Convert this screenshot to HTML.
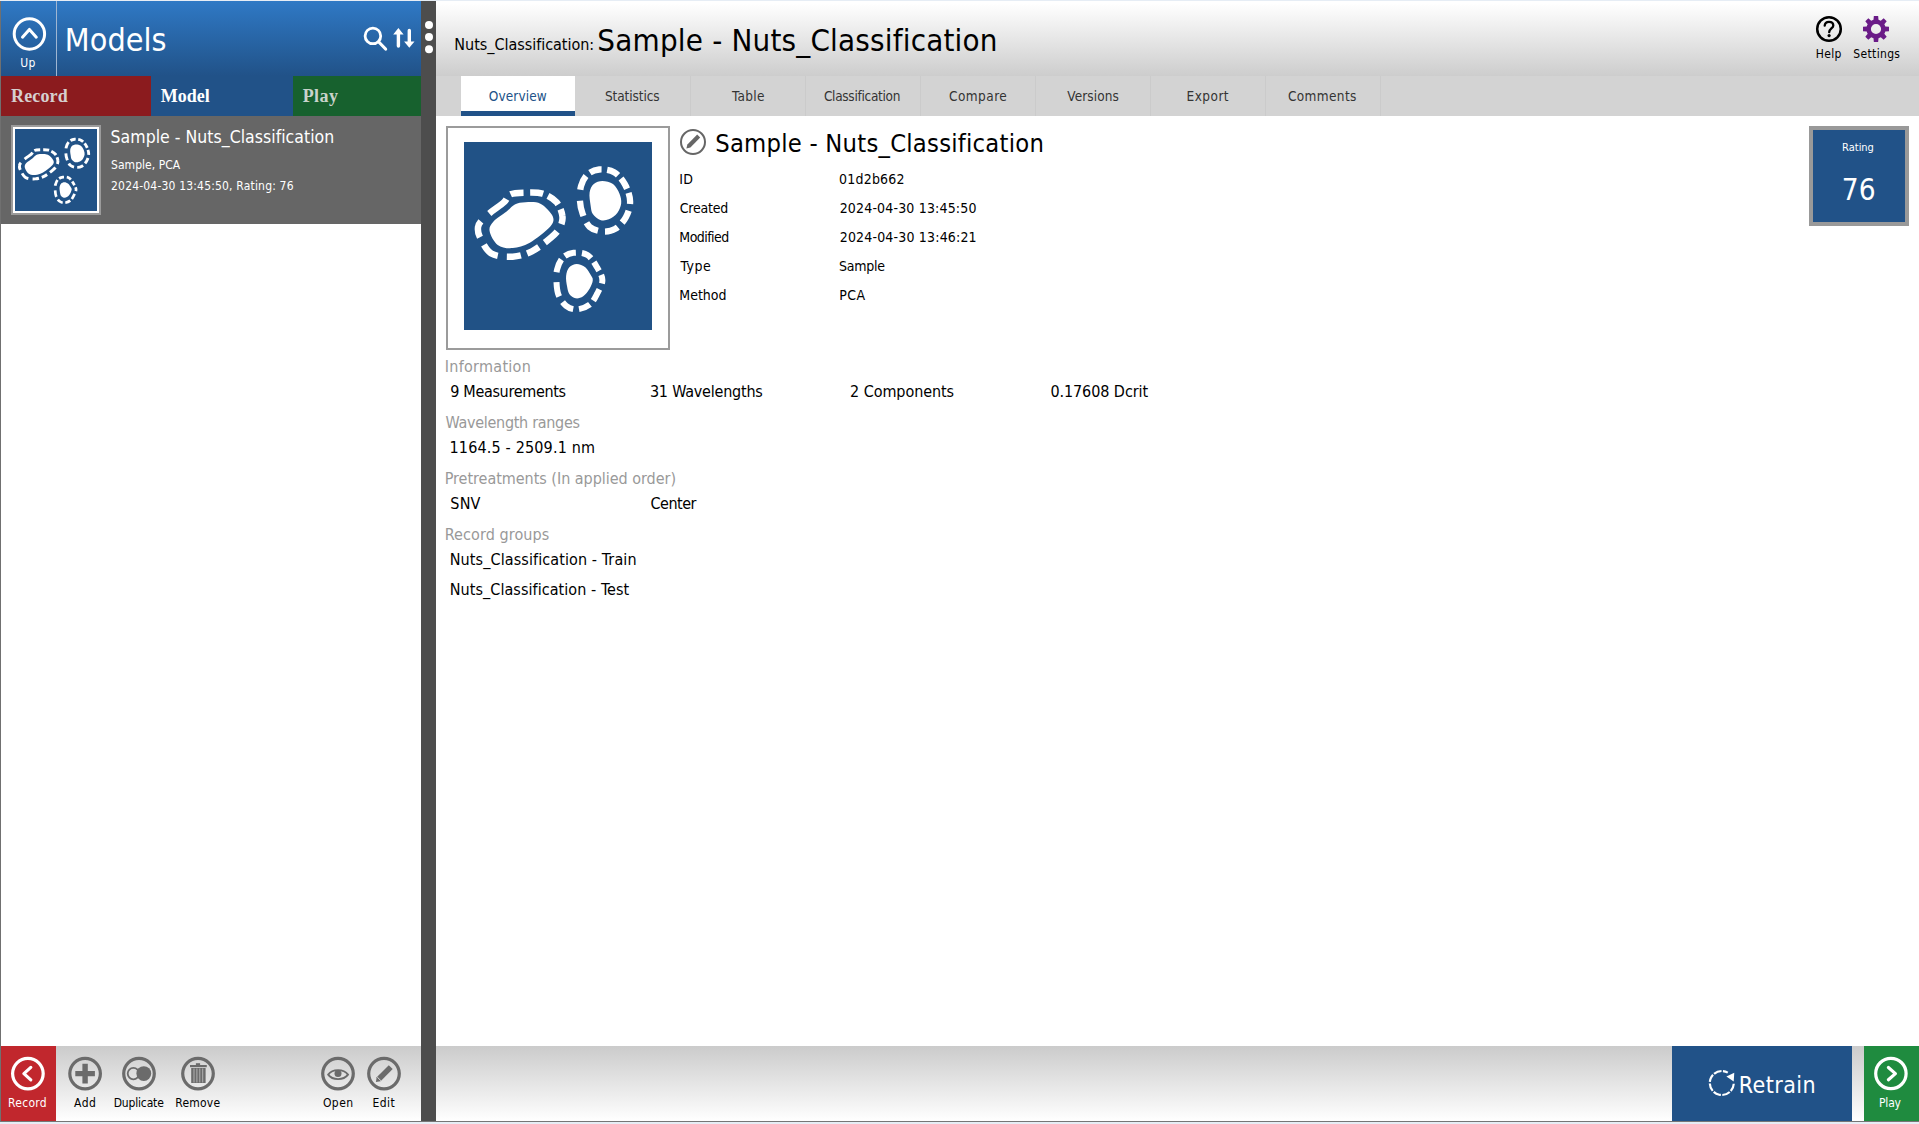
<!DOCTYPE html>
<html lang="en"><head><meta charset="utf-8"><title>Models - Nuts_Classification</title>
<style>
html,body{margin:0;padding:0}
body{width:1919px;height:1124px;position:relative;overflow:hidden;background:#fff;font-family:"DejaVu Sans Condensed","Liberation Sans",sans-serif}
.a{position:absolute}
.t{position:absolute;white-space:nowrap;line-height:1}
svg{position:absolute;overflow:visible}
#topline{left:0;top:0;width:1919px;height:1px;background:#e6edf5}
#leftedge{left:0;top:1px;width:1px;height:1120px;background:#707070}
#lhead{left:1px;top:1px;width:420px;height:75px;background:linear-gradient(#2f79c5,#215288)}
#lsep{left:56px;top:1px;width:1px;height:75px;background:#9fb6d2}
#tabrec{left:1px;top:76px;width:150px;height:40px;background:#8b1b1e}
#tabmod{left:151px;top:76px;width:142px;height:40px;background:#215288}
#tabplay{left:293px;top:76px;width:128px;height:40px;background:#17612e}
#item{left:1px;top:116px;width:420px;height:108px;background:#666}
#thumb{left:11px;top:125px;width:82px;height:82px;border:2px solid #9b9b9b;box-shadow:inset 0 0 0 2px #fff;background:#215286;padding:2px}
#split{left:421px;top:1px;width:15px;height:1120px;background:#4d4d4d}
#rhead{left:436px;top:1px;width:1483px;height:75px;background:linear-gradient(#fff 0,#fff 3%,#cdcdcd 100%)}
#rtabs{left:436px;top:76px;width:1483px;height:40px;background:#d3d3d3}
.sep{position:absolute;top:76px;width:1px;height:40px;background:#cbcbcb}
#tabact{left:461px;top:76px;width:114px;height:40px;background:#fff}
#tabul{left:461px;top:111px;width:114px;height:5px;background:#215288}
#frame{left:446px;top:126px;width:220px;height:220px;border:2px solid #9b9b9b;background:#fff}
#bigicon{left:464px;top:142px;width:188px;height:188px;background:#215286}
#rating{left:1809px;top:126px;width:92px;height:92px;border:4px solid #999;background:#215288}
#lbot{left:1px;top:1046px;width:420px;height:75px;background:linear-gradient(#cbcbcb,#fff)}
#rbot{left:436px;top:1046px;width:1483px;height:75px;background:linear-gradient(#cbcbcb,#fff)}
#brec{left:1px;top:1046px;width:55px;height:75px;background:#c1272d}
#bretrain{left:1672px;top:1046px;width:180px;height:75px;background:#215288}
#bplay{left:1864px;top:1046px;width:55px;height:75px;background:#1f8b3f}
#botline{left:0;top:1121px;width:1919px;height:1px;background:#767676}
#botpad{left:0;top:1122px;width:1919px;height:2px;background:#e6edf5}

</style></head>
<body>
<div class="a" id="topline"></div>
<div class="a" id="leftedge"></div>
<!-- left panel -->
<div class="a" id="lhead"></div>
<div class="a" id="lsep"></div>
<svg style="left:0;top:0" width="60" height="76" viewBox="0 0 60 76"><circle cx="29.4" cy="34" r="15.2" fill="none" stroke="#fff" stroke-width="3"/><path d="M22.5 37.2 L29.4 29.4 L36.3 37.2" fill="none" stroke="#fff" stroke-width="3" stroke-linecap="round" stroke-linejoin="round"/></svg>
<svg style="left:355px;top:0" width="66" height="76" viewBox="355 0 66 76"><circle cx="372.9" cy="35.9" r="7.8" fill="none" stroke="#fff" stroke-width="2.8"/><path d="M378.8 42 L385.6 49" stroke="#fff" stroke-width="3.2" stroke-linecap="round"/>
<path d="M398.4 28 L403.6 34.4 L400.1 34.4 L400.1 46 A1.7 1.7 0 0 1 396.7 46 L396.7 34.4 L393.2 34.4 Z" fill="#fff"/>
<path d="M409.3 47.8 L404.1 41.6 L407.6 41.6 L407.6 30.5 A1.7 1.7 0 0 1 411 30.5 L411 41.6 L414.5 41.6 Z" fill="#fff"/></svg>
<div class="a" id="tabrec"></div><div class="a" id="tabmod"></div><div class="a" id="tabplay"></div>
<div class="a" id="item"></div>
<div class="a" id="thumb"><svg style="position:static;display:block" width="82" height="82" viewBox="0 0 188 188"><g transform="translate(94 94) scale(1.043) translate(-94.3 -95.2)" fill="#fff" stroke="none">
<path d="M50.8 62.4C54.0 60.8 57.2 60.3 61.5 60.2C65.8 60.1 71.9 59.4 76.4 61.7C81.0 64.0 87.0 70.3 88.6 74.1C90.2 77.9 89.9 80.3 86.1 84.8C82.2 89.2 72.0 97.2 65.8 100.8C59.5 104.3 54.0 105.8 48.7 106.1C43.3 106.5 37.6 105.8 33.7 102.9C29.9 100.1 26.3 93.0 25.6 89.0C24.9 85.1 26.7 82.6 29.5 79.4C32.2 76.2 38.7 72.7 42.3 69.8C45.8 67.0 47.6 64.0 50.8 62.4Z"/>
<path d="M125.6 50.6C126.1 47.0 127.7 44.0 129.8 42.1C132.0 40.1 135.2 38.9 138.4 38.9C141.6 38.9 146.2 39.9 149.0 42.1C151.9 44.2 154.1 48.5 155.5 51.7C156.8 54.9 157.5 58.1 157.2 61.3C156.8 64.5 155.4 68.2 153.3 70.9C151.3 73.6 147.6 76.1 144.8 77.3C141.9 78.5 138.9 78.8 136.2 77.9C133.6 77.1 130.4 74.4 128.8 72.0C127.2 69.5 127.2 67.0 126.6 63.4C126.1 59.9 125.0 54.2 125.6 50.6Z"/>
<path d="M102.1 133.9C102.4 130.7 103.5 127.3 105.3 125.3C107.1 123.4 110.1 122.1 112.7 122.1C115.4 122.1 119.0 123.6 121.3 125.3C123.6 127.1 125.4 130.7 126.6 132.8C127.9 135.0 128.9 135.8 128.8 138.2C128.6 140.5 127.2 144.0 125.6 146.7C124.0 149.4 121.5 152.6 119.2 154.2C116.8 155.8 114.0 156.7 111.7 156.3C109.4 156.0 106.7 154.0 105.3 152.0C103.9 150.1 103.7 147.6 103.1 144.6C102.6 141.5 101.7 137.1 102.1 133.9Z"/>
<g fill="none" stroke="#fff" stroke-width="6.5" stroke-dasharray="13.10 6.75 12.91 5.36 13.40 5.26 15.19 8.74 16.58 7.25 13.40 6.65 14.30 8.93 18.37 8.44 17.37 11.42 22.34 6.95">
<path d="M46.6 52.3C50.1 50.7 56.2 50.7 61.5 50.6C66.8 50.5 73.4 50.1 78.6 51.7C83.7 53.3 89.2 56.5 92.5 60.2C95.8 64.0 97.9 69.8 98.4 74.1C99.0 78.4 97.6 82.3 95.7 85.8C93.8 89.4 91.8 91.5 87.1 95.5C82.5 99.4 74.3 106.1 67.9 109.3C61.5 112.5 55.4 114.3 48.7 114.7C41.9 115.0 32.8 114.8 27.3 111.5C21.8 108.1 17.8 98.8 15.6 94.4C13.4 89.9 13.7 87.4 14.1 84.8C14.4 82.1 15.5 80.9 17.7 78.4C19.9 75.9 23.6 72.9 27.3 69.8C31.1 66.8 36.9 63.1 40.1 60.2C43.3 57.3 43.0 53.9 46.6 52.3Z"/>
<path stroke-width="6.3" stroke-dasharray="2.53 5.45 12.26 4.38 11.97 4.28 11.29 6.81 13.72 6.03 13.92 7.20 14.31 7.30 15.87 10.90 14.99 5.35 10.22 0.00" d="M135.2 27.5C139.6 27.2 145.8 27.9 150.1 30.3C154.4 32.7 158.1 37.3 160.8 42.1C163.5 46.9 166.0 53.6 166.1 59.2C166.3 64.7 164.4 70.5 161.9 75.2C159.4 79.8 155.1 84.5 151.2 86.9C147.3 89.3 142.6 89.8 138.4 89.5C134.1 89.1 128.8 87.7 125.6 84.8C122.3 81.9 120.3 76.2 118.7 72.0C117.1 67.7 116.2 63.8 116.0 59.2C115.7 54.5 115.8 48.7 117.0 44.2C118.3 39.8 120.4 35.2 123.4 32.5C126.5 29.7 130.7 27.9 135.2 27.5Z"/>
<path stroke-width="6" stroke-dasharray="2.53 5.94 10.62 4.87 10.03 4.68 8.77 6.43 12.76 5.16 11.79 5.94 13.05 6.53 14.71 9.84 13.54 5.07 9.64 0.00" d="M109.5 110.8C113.6 110.4 119.5 110.5 123.4 113.0C127.3 115.4 130.5 121.1 133.0 125.3C135.5 129.5 138.4 133.7 138.4 138.2C138.4 142.6 135.2 147.9 133.0 152.0C130.9 156.1 128.9 160.2 125.6 162.7C122.2 165.3 116.7 167.2 112.7 167.4C108.8 167.6 105.1 166.2 102.1 163.8C99.0 161.4 96.2 157.0 94.6 153.1C93.0 149.2 92.7 144.6 92.5 140.3C92.2 136.0 92.0 131.6 93.1 127.5C94.2 123.4 96.1 118.5 98.9 115.7C101.6 113.0 105.5 111.3 109.5 110.8Z"/>
</g></g></svg></div>
<div class="a" id="split"></div>
<svg style="left:421px;top:0" width="15" height="76" viewBox="421 0 15 76"><circle cx="429" cy="25" r="4" fill="#fff"/><circle cx="429" cy="37" r="4" fill="#fff"/><circle cx="429" cy="49.2" r="4" fill="#fff"/></svg>
<!-- right panel -->
<div class="a" id="rhead"></div>
<div class="a" id="rtabs"></div>
<div class="a" id="tabact"></div><div class="a" id="tabul"></div>
<div class="sep" style="left:690px"></div><div class="sep" style="left:805px"></div><div class="sep" style="left:920px"></div><div class="sep" style="left:1035px"></div><div class="sep" style="left:1150px"></div><div class="sep" style="left:1265px"></div><div class="sep" style="left:1380px"></div>
<svg style="left:1810px;top:10px" width="100" height="40" viewBox="1810 10 100 40"><circle cx="1829" cy="29" r="11.8" fill="none" stroke="#000" stroke-width="2.5"/>
<path d="M1824.7 25.6 C1824.9 23.2 1826.7 21.8 1829 21.8 C1831.5 21.8 1833.3 23.3 1833.3 25.4 C1833.3 28.2 1829.2 28.8 1829.2 32.2" fill="none" stroke="#000" stroke-width="2.3" stroke-linecap="round"/><circle cx="1829.1" cy="35.6" r="1.6" fill="#000"/>
<path id="gear" fill="#6a1b87" fill-rule="evenodd" d="M1873.50 19.73L1873.85 16.00 L1878.15 16.00 L1878.50 19.73A9.6 9.6 0 0 1 1880.79 20.68L1883.67 18.29 L1886.71 21.33 L1884.32 24.21A9.6 9.6 0 0 1 1885.27 26.50L1889.00 26.85 L1889.00 31.15 L1885.27 31.50A9.6 9.6 0 0 1 1884.32 33.79L1886.71 36.67 L1883.67 39.71 L1880.79 37.32A9.6 9.6 0 0 1 1878.50 38.27L1878.15 42.00 L1873.85 42.00 L1873.50 38.27A9.6 9.6 0 0 1 1871.21 37.32L1868.33 39.71 L1865.29 36.67 L1867.68 33.79A9.6 9.6 0 0 1 1866.73 31.50L1863.00 31.15 L1863.00 26.85 L1866.73 26.50A9.6 9.6 0 0 1 1867.68 24.21L1865.29 21.33 L1868.33 18.29 L1871.21 20.68A9.6 9.6 0 0 1 1873.50 19.73 ZM1870.90 29.00 a5.1 5.1 0 1 0 10.20 0 a5.1 5.1 0 1 0 -10.20 0 Z"/></svg>
<div class="a" id="frame"></div>
<div class="a" id="bigicon"><svg style="position:static;display:block" width="188" height="188" viewBox="0 0 188 188"><g fill="#fff" stroke="none">
<path d="M50.8 62.4C54.0 60.8 57.2 60.3 61.5 60.2C65.8 60.1 71.9 59.4 76.4 61.7C81.0 64.0 87.0 70.3 88.6 74.1C90.2 77.9 89.9 80.3 86.1 84.8C82.2 89.2 72.0 97.2 65.8 100.8C59.5 104.3 54.0 105.8 48.7 106.1C43.3 106.5 37.6 105.8 33.7 102.9C29.9 100.1 26.3 93.0 25.6 89.0C24.9 85.1 26.7 82.6 29.5 79.4C32.2 76.2 38.7 72.7 42.3 69.8C45.8 67.0 47.6 64.0 50.8 62.4Z"/>
<path d="M125.6 50.6C126.1 47.0 127.7 44.0 129.8 42.1C132.0 40.1 135.2 38.9 138.4 38.9C141.6 38.9 146.2 39.9 149.0 42.1C151.9 44.2 154.1 48.5 155.5 51.7C156.8 54.9 157.5 58.1 157.2 61.3C156.8 64.5 155.4 68.2 153.3 70.9C151.3 73.6 147.6 76.1 144.8 77.3C141.9 78.5 138.9 78.8 136.2 77.9C133.6 77.1 130.4 74.4 128.8 72.0C127.2 69.5 127.2 67.0 126.6 63.4C126.1 59.9 125.0 54.2 125.6 50.6Z"/>
<path d="M102.1 133.9C102.4 130.7 103.5 127.3 105.3 125.3C107.1 123.4 110.1 122.1 112.7 122.1C115.4 122.1 119.0 123.6 121.3 125.3C123.6 127.1 125.4 130.7 126.6 132.8C127.9 135.0 128.9 135.8 128.8 138.2C128.6 140.5 127.2 144.0 125.6 146.7C124.0 149.4 121.5 152.6 119.2 154.2C116.8 155.8 114.0 156.7 111.7 156.3C109.4 156.0 106.7 154.0 105.3 152.0C103.9 150.1 103.7 147.6 103.1 144.6C102.6 141.5 101.7 137.1 102.1 133.9Z"/>
<g fill="none" stroke="#fff" stroke-width="6.5" stroke-dasharray="13.10 6.75 12.91 5.36 13.40 5.26 15.19 8.74 16.58 7.25 13.40 6.65 14.30 8.93 18.37 8.44 17.37 11.42 22.34 6.95">
<path d="M46.6 52.3C50.1 50.7 56.2 50.7 61.5 50.6C66.8 50.5 73.4 50.1 78.6 51.7C83.7 53.3 89.2 56.5 92.5 60.2C95.8 64.0 97.9 69.8 98.4 74.1C99.0 78.4 97.6 82.3 95.7 85.8C93.8 89.4 91.8 91.5 87.1 95.5C82.5 99.4 74.3 106.1 67.9 109.3C61.5 112.5 55.4 114.3 48.7 114.7C41.9 115.0 32.8 114.8 27.3 111.5C21.8 108.1 17.8 98.8 15.6 94.4C13.4 89.9 13.7 87.4 14.1 84.8C14.4 82.1 15.5 80.9 17.7 78.4C19.9 75.9 23.6 72.9 27.3 69.8C31.1 66.8 36.9 63.1 40.1 60.2C43.3 57.3 43.0 53.9 46.6 52.3Z"/>
<path stroke-width="6.3" stroke-dasharray="2.53 5.45 12.26 4.38 11.97 4.28 11.29 6.81 13.72 6.03 13.92 7.20 14.31 7.30 15.87 10.90 14.99 5.35 10.22 0.00" d="M135.2 27.5C139.6 27.2 145.8 27.9 150.1 30.3C154.4 32.7 158.1 37.3 160.8 42.1C163.5 46.9 166.0 53.6 166.1 59.2C166.3 64.7 164.4 70.5 161.9 75.2C159.4 79.8 155.1 84.5 151.2 86.9C147.3 89.3 142.6 89.8 138.4 89.5C134.1 89.1 128.8 87.7 125.6 84.8C122.3 81.9 120.3 76.2 118.7 72.0C117.1 67.7 116.2 63.8 116.0 59.2C115.7 54.5 115.8 48.7 117.0 44.2C118.3 39.8 120.4 35.2 123.4 32.5C126.5 29.7 130.7 27.9 135.2 27.5Z"/>
<path stroke-width="6" stroke-dasharray="2.53 5.94 10.62 4.87 10.03 4.68 8.77 6.43 12.76 5.16 11.79 5.94 13.05 6.53 14.71 9.84 13.54 5.07 9.64 0.00" d="M109.5 110.8C113.6 110.4 119.5 110.5 123.4 113.0C127.3 115.4 130.5 121.1 133.0 125.3C135.5 129.5 138.4 133.7 138.4 138.2C138.4 142.6 135.2 147.9 133.0 152.0C130.9 156.1 128.9 160.2 125.6 162.7C122.2 165.3 116.7 167.2 112.7 167.4C108.8 167.6 105.1 166.2 102.1 163.8C99.0 161.4 96.2 157.0 94.6 153.1C93.0 149.2 92.7 144.6 92.5 140.3C92.2 136.0 92.0 131.6 93.1 127.5C94.2 123.4 96.1 118.5 98.9 115.7C101.6 113.0 105.5 111.3 109.5 110.8Z"/>
</g></g></svg></div>
<svg style="left:678px;top:127px" width="30" height="30" viewBox="678 127 30 30"><circle cx="693" cy="142" r="12" fill="none" stroke="#666" stroke-width="2"/><path d="M697.2 134.6 L700.2 137.6 L690.4 147.4 L686.4 148.4 L687.4 144.4 Z" fill="#666"/></svg>
<div class="a" id="rating"></div>
<!-- bottom bars -->
<div class="a" id="lbot"></div><div class="a" id="rbot"></div>
<div class="a" id="brec"></div><div class="a" id="bretrain"></div><div class="a" id="bplay"></div>
<svg style="left:0;top:1046px" width="421" height="75" viewBox="0 1046 421 75">
<circle cx="27.9" cy="1073.6" r="15.3" fill="none" stroke="#fff" stroke-width="3.2"/><path d="M30.8 1067.4 L23.9 1073.6 L30.8 1079.9" fill="none" stroke="#fff" stroke-width="3.2" stroke-linecap="round" stroke-linejoin="round"/>
<g fill="none" stroke="#6b6b6b" stroke-width="3.2"><circle cx="85.1" cy="1073.6" r="15.3"/><circle cx="139" cy="1073.6" r="15.3"/><circle cx="198" cy="1073.6" r="15.3"/><circle cx="338" cy="1073.6" r="15.3"/><circle cx="384" cy="1073.6" r="15.3"/></g>
<path d="M82.4 1063.8 h5.4 v7.1 h7.1 v5.4 h-7.1 v7.1 h-5.4 v-7.1 h-7.1 v-5.4 h7.1 Z" fill="#6b6b6b"/>
<circle cx="133.4" cy="1073.6" r="5.7" fill="none" stroke="#6b6b6b" stroke-width="1.8"/><circle cx="143.8" cy="1073.6" r="7.4" fill="#6b6b6b"/>
<g fill="#6b6b6b"><rect x="195.9" y="1063.2" width="4.2" height="2"/><rect x="190" y="1065" width="16.8" height="2.2"/><rect x="191.2" y="1068" width="14.4" height="15"/></g>
<g stroke="#b9b9b9" stroke-width="0.9"><path d="M194 1068.5v14M196.9 1068.5v14M199.8 1068.5v14M202.7 1068.5v14"/></g>
<path d="M328.2 1074.6 C332.5 1068.6 343.5 1068.6 348 1074.6 C343.5 1080.6 332.5 1080.6 328.2 1074.6 Z" fill="none" stroke="#6b6b6b" stroke-width="1.9"/><circle cx="338" cy="1073.6" r="3.5" fill="#6b6b6b"/>
<path d="M388.8 1065.2 L392.7 1069.1 L380.6 1081.2 L375.9 1082 L376.7 1077.3 Z" fill="#6b6b6b"/><path d="M377.2 1077 L380.9 1080.7" stroke="#dcdcdc" stroke-width="1"/>
</svg>
<svg style="left:1672px;top:1046px" width="247" height="75" viewBox="1672 1046 247 75">
<path d="M1733.78 1083.71 A12.0 12.0 0 1 1 1727.80 1072.61" fill="none" stroke="#fff" stroke-width="2.2" stroke-dasharray="8 1.42"/>
<path d="M1734.3 1072.8 L1726.4 1076.6 L1733.7 1081.4 Z" fill="#fff"/>
<circle cx="1890.9" cy="1073.5" r="15.2" fill="none" stroke="#fff" stroke-width="3.2"/><path d="M1888.4 1067.5 L1895.4 1073.6 L1888.4 1079.8" fill="none" stroke="#fff" stroke-width="3.2" stroke-linecap="round" stroke-linejoin="round"/>
</svg>
<div class="a" id="botline"></div><div class="a" id="botpad"></div>

<!-- text labels -->
<div class="t" id="t0" style="left:20.21px;top:57.00px;font-size:12px;color:#fff;letter-spacing:0.450px;">Up</div>
<div class="t" id="t1" style="left:64.85px;top:24.01px;font-size:32px;color:#fff;letter-spacing:0.055px;">Models</div>
<div class="t" id="t2" style="left:11.00px;top:87.00px;font-size:18px;color:#d6cfcf;font-family:'Liberation Serif',serif;letter-spacing:0.141px;font-weight:bold">Record</div>
<div class="t" id="t3" style="left:160.68px;top:87.00px;font-size:18px;color:#fff;font-family:'Liberation Serif',serif;letter-spacing:0.047px;font-weight:bold">Model</div>
<div class="t" id="t4" style="left:302.68px;top:87.00px;font-size:18px;color:#c9d3cb;font-family:'Liberation Serif',serif;letter-spacing:0.450px;font-weight:bold">Play</div>
<div class="t" id="t5" style="left:110.58px;top:129.01px;font-size:17.5px;color:#fff;letter-spacing:0.027px;">Sample - Nuts_Classification</div>
<div class="t" id="t6" style="left:111.03px;top:159.00px;font-size:12px;color:#fff;letter-spacing:0.044px;">Sample, PCA</div>
<div class="t" id="t7" style="left:111.06px;top:180.00px;font-size:12px;color:#fff;letter-spacing:0.180px;">2024-04-30 13:45:50, Rating: 76</div>
<div class="t" id="t8" style="left:454.37px;top:37.01px;font-size:16px;color:#000;letter-spacing:-0.028px;">Nuts_Classification:</div>
<div class="t" id="t9" style="left:597.35px;top:25.01px;font-size:31px;color:#000;letter-spacing:0.197px;">Sample - Nuts_Classification</div>
<div class="t" id="t10" style="left:1815.77px;top:48.00px;font-size:12px;color:#000;letter-spacing:0.305px;">Help</div>
<div class="t" id="t11" style="left:1853.32px;top:48.00px;font-size:12px;color:#000;letter-spacing:0.341px;">Settings</div>
<div class="t" id="t12" style="left:488.79px;top:90.00px;font-size:13.5px;color:#215288;letter-spacing:0.109px;">Overview</div>
<div class="t" id="t13" style="left:605.02px;top:90.00px;font-size:13.5px;color:#333;letter-spacing:-0.110px;">Statistics</div>
<div class="t" id="t14" style="left:732.11px;top:90.00px;font-size:13.5px;color:#333;letter-spacing:0.274px;">Table</div>
<div class="t" id="t15" style="left:823.95px;top:90.00px;font-size:13.5px;color:#333;letter-spacing:-0.298px;">Classification</div>
<div class="t" id="t16" style="left:949.01px;top:90.00px;font-size:13.5px;color:#333;letter-spacing:0.450px;">Compare</div>
<div class="t" id="t17" style="left:1067.33px;top:90.00px;font-size:13.5px;color:#333;letter-spacing:0.086px;">Versions</div>
<div class="t" id="t18" style="left:1186.62px;top:90.00px;font-size:13.5px;color:#333;letter-spacing:0.450px;">Export</div>
<div class="t" id="t19" style="left:1287.98px;top:90.00px;font-size:13.5px;color:#333;letter-spacing:0.370px;">Comments</div>
<div class="t" id="t20" style="left:715.21px;top:131.00px;font-size:25.3px;color:#000;letter-spacing:0.238px;">Sample - Nuts_Classification</div>
<div class="t" id="t21" style="left:679.18px;top:172.00px;font-size:14px;color:#000;letter-spacing:0.450px;">ID</div>
<div class="t" id="t22" style="left:839.04px;top:172.00px;font-size:14px;color:#000;letter-spacing:0.204px;">01d2b662</div>
<div class="t" id="t23" style="left:679.81px;top:201.00px;font-size:14px;color:#000;letter-spacing:-0.232px;">Created</div>
<div class="t" id="t24" style="left:839.69px;top:201.00px;font-size:14px;color:#000;letter-spacing:0.167px;">2024-04-30 13:45:50</div>
<div class="t" id="t25" style="left:679.34px;top:230.00px;font-size:14px;color:#000;letter-spacing:-0.559px;">Modified</div>
<div class="t" id="t26" style="left:839.69px;top:230.00px;font-size:14px;color:#000;letter-spacing:0.178px;">2024-04-30 13:46:21</div>
<div class="t" id="t27" style="left:680.61px;top:259.00px;font-size:14px;color:#000;letter-spacing:0.450px;">Type</div>
<div class="t" id="t28" style="left:839.00px;top:259.00px;font-size:14px;color:#000;letter-spacing:-0.254px;">Sample</div>
<div class="t" id="t29" style="left:679.34px;top:288.00px;font-size:14px;color:#000;letter-spacing:-0.030px;">Method</div>
<div class="t" id="t30" style="left:839.34px;top:288.00px;font-size:14px;color:#000;letter-spacing:0.450px;">PCA</div>
<div class="t" id="t31" style="left:444.71px;top:359.01px;font-size:16px;color:#999;letter-spacing:0.281px;">Information</div>
<div class="t" id="t32" style="left:450.24px;top:384.01px;font-size:16px;color:#000;letter-spacing:-0.323px;">9 Measurements</div>
<div class="t" id="t33" style="left:649.90px;top:384.01px;font-size:16px;color:#000;letter-spacing:-0.212px;">31 Wavelengths</div>
<div class="t" id="t34" style="left:850.12px;top:384.01px;font-size:16px;color:#000;letter-spacing:-0.072px;">2 Components</div>
<div class="t" id="t35" style="left:1050.38px;top:384.01px;font-size:16px;color:#000;letter-spacing:-0.073px;">0.17608 Dcrit</div>
<div class="t" id="t36" style="left:445.60px;top:415.01px;font-size:16px;color:#999;letter-spacing:-0.300px;">Wavelength ranges</div>
<div class="t" id="t37" style="left:449.55px;top:440.01px;font-size:16px;color:#000;letter-spacing:0.159px;">1164.5 - 2509.1 nm</div>
<div class="t" id="t38" style="left:444.69px;top:471.01px;font-size:16px;color:#999;letter-spacing:-0.030px;">Pretreatments (In applied order)</div>
<div class="t" id="t39" style="left:450.28px;top:496.01px;font-size:16px;color:#000;letter-spacing:0.224px;">SNV</div>
<div class="t" id="t40" style="left:650.55px;top:496.01px;font-size:16px;color:#000;letter-spacing:-0.501px;">Center</div>
<div class="t" id="t41" style="left:444.69px;top:527.20px;font-size:16px;color:#999;letter-spacing:0.090px;">Record groups</div>
<div class="t" id="t42" style="left:449.74px;top:552.01px;font-size:16px;color:#000;letter-spacing:0.104px;">Nuts_Classification - Train</div>
<div class="t" id="t43" style="left:449.74px;top:582.01px;font-size:16px;color:#000;letter-spacing:0.062px;">Nuts_Classification - Test</div>
<div class="t" id="t44" style="left:1842.12px;top:142.01px;font-size:11px;color:#fff;letter-spacing:-0.019px;">Rating</div>
<div class="t" id="t45" style="left:1841.82px;top:176.01px;font-size:29.5px;color:#fff;letter-spacing:0.112px;">76</div>
<div class="t" id="t46" style="left:8.09px;top:1097.00px;font-size:12px;color:#fff;letter-spacing:0.256px;">Record</div>
<div class="t" id="t47" style="left:74.12px;top:1097.00px;font-size:12px;color:#000;letter-spacing:0.450px;">Add</div>
<div class="t" id="t48" style="left:113.65px;top:1097.00px;font-size:12px;color:#000;letter-spacing:-0.158px;">Duplicate</div>
<div class="t" id="t49" style="left:175.26px;top:1097.00px;font-size:12px;color:#000;letter-spacing:0.222px;">Remove</div>
<div class="t" id="t50" style="left:322.91px;top:1097.00px;font-size:12px;color:#000;letter-spacing:0.450px;">Open</div>
<div class="t" id="t51" style="left:372.53px;top:1097.00px;font-size:12px;color:#000;letter-spacing:0.401px;">Edit</div>
<div class="t" id="t52" style="left:1738.81px;top:1073.81px;font-size:23px;color:#fff;letter-spacing:0.429px;">Retrain</div>
<div class="t" id="t53" style="left:1879.03px;top:1096.50px;font-size:12px;color:#fff;letter-spacing:-0.184px;">Play</div>
</body></html>
